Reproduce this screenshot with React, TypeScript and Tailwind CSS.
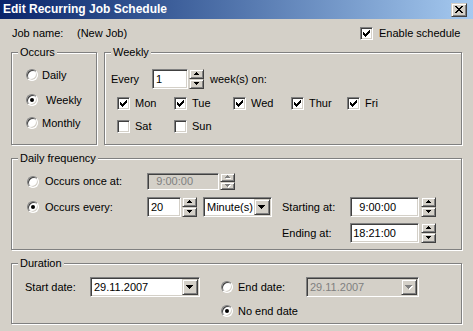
import type { ReactNode } from "react";

const sunken =
  "border border-t-[#808080] border-l-[#808080] border-b-white border-r-white shadow-[inset_1px_1px_0_#404040,inset_-1px_-1px_0_#d4d0c8]";
const raised =
  "border border-t-[#d4d0c8] border-l-[#d4d0c8] border-b-[#404040] border-r-[#404040] shadow-[inset_1px_1px_0_#ffffff,inset_-1px_-1px_0_#808080] bg-[#d4d0c8]";

function Arrow({ dir, disabled, big }: { dir: "up" | "down"; disabled?: boolean; big?: boolean }) {
  const w = big ? 7 : 5;
  const h = big ? 4 : 3;
  const pts = dir === "up" ? `0,${h} ${w / 2},0 ${w},${h}` : `0,0 ${w},0 ${w / 2},${h}`;
  const fill = disabled ? "#808080" : "#000000";
  return (
    <svg width={w + 1} height={h + 1} viewBox={`0 0 ${w + 1} ${h + 1}`} shapeRendering="crispEdges">
      {disabled && <polygon points={pts} fill="#ffffff" transform="translate(1 1)" />}
      <polygon points={pts} fill={fill} />
    </svg>
  );
}

function Spin({ disabled, short }: { disabled?: boolean; short?: boolean }) {
  return (
    <div className={`flex w-[15px] shrink-0 flex-col ${short ? "h-[17px]" : "h-[20px]"}`}>
      <div className={`${raised} flex flex-1 items-center justify-center`}>
        <Arrow dir="up" disabled={disabled} />
      </div>
      <div className={`${raised} flex flex-1 items-center justify-center`}>
        <Arrow dir="down" disabled={disabled} />
      </div>
    </div>
  );
}

function Check({ checked }: { checked?: boolean }) {
  const cols = [2, 3, 4, 3, 2, 1, 0];
  return (
    <span className={`${sunken} flex h-[13px] w-[13px] shrink-0 items-center justify-center bg-white`}>
      {checked && (
        <svg width="7" height="7" viewBox="0 0 7 7" shapeRendering="crispEdges">
          {cols.map((y, x) => (
            <rect key={x} x={x} y={y} width="1" height="3" fill="#000" />
          ))}
        </svg>
      )}
    </span>
  );
}

function Radio({ checked }: { checked?: boolean }) {
  return (
    <span className="flex h-[12px] w-[12px] shrink-0 items-center justify-center rounded-full border border-t-[#808080] border-l-[#808080] border-b-white border-r-white bg-white shadow-[inset_1px_1px_0_#404040,inset_-1px_-1px_0_#d4d0c8]">
      {checked && <span className="h-[4px] w-[4px] rounded-full bg-black" />}
    </span>
  );
}

function Combo({ text, w, disabled }: { text: string; w: string; disabled?: boolean }) {
  return (
    <div
      className={`${sunken} flex h-[20px] shrink-0 items-stretch p-[1px] ${w} ${
        disabled ? "bg-[#d4d0c8] text-[#808080]" : "bg-white"
      }`}
    >
      <span className="flex min-w-0 flex-1 items-center overflow-hidden whitespace-nowrap pl-[2px]">{text}</span>
      <span className={`${raised} flex w-[16px] shrink-0 items-center justify-center`}>
        <Arrow dir="down" big disabled={disabled} />
      </span>
    </div>
  );
}

function Group({ title, className, children }: { title: string; className: string; children: ReactNode }) {
  return (
    <div className={`border border-[#808080] shadow-[inset_1px_1px_0_#ffffff,1px_1px_0_#ffffff] ${className}`}>
      <div className="-mt-[7px] ml-[6px] h-[13px] w-fit bg-[#d4d0c8] px-[2px] leading-[13px]">{title}</div>
      {children}
    </div>
  );
}

function CloseGlyph() {
  const rows = [
    [0, 1, 6, 7],
    [1, 2, 5, 6],
    [2, 3, 4, 5],
    [3, 4],
    [2, 3, 4, 5],
    [1, 2, 5, 6],
    [0, 1, 6, 7],
  ];
  return (
    <svg width="8" height="7" viewBox="0 0 8 7" shapeRendering="crispEdges">
      {rows.map((xs, y) => xs.map((x) => <rect key={`${x}-${y}`} x={x} y={y} width="1" height="1" fill="#000" />))}
    </svg>
  );
}

const days = [
  { label: "Mon", on: true, w: "w-[57px]" },
  { label: "Tue", on: true, w: "w-[59px]" },
  { label: "Wed", on: true, w: "w-[58px]" },
  { label: "Thur", on: true, w: "w-[56px]" },
  { label: "Fri", on: true, w: "w-[50px]" },
];

export default function App() {
  return (
    <div className="h-[331px] w-[473px] overflow-hidden bg-[#d4d0c8] font-['Liberation_Sans',Arial,sans-serif] text-[11px] leading-[13px] text-black select-none">
      <div className="flex h-[19px] items-center justify-between bg-gradient-to-r from-[#0a246a] to-[#a6caf0] pl-[3px] pr-[6px]">
        <span className="text-[12px] font-bold text-white">Edit Recurring Job Schedule</span>
        <span className={`${raised} flex h-[14px] w-[16px] items-center justify-center`}>
          <CloseGlyph />
        </span>
      </div>

      <div className="px-[11px]">
        <div className="mt-[7px] flex h-[14px] items-center">
          <span className="w-[66px] pl-[1px]">Job name:</span>
          <span>(New Job)</span>
          <div className="ml-auto flex w-[102px] items-center gap-[6px]">
            <Check checked />
            <span>Enable schedule</span>
          </div>
        </div>

        <div className="mt-[12px] flex gap-[7px]">
          <Group title="Occurs" className="h-[93px] w-[86px]">
            <div className="mt-[9px] flex h-[14px] items-center gap-[4px] pl-[14px]">
              <Radio />
              <span>Daily</span>
            </div>
            <div className="mt-[11px] flex h-[14px] items-center gap-[4px] pl-[14px]">
              <Radio checked />
              <span className="ml-[4px]">Weekly</span>
            </div>
            <div className="mt-[9px] flex h-[14px] items-center gap-[4px] pl-[14px]">
              <Radio />
              <span>Monthly</span>
            </div>
          </Group>

          <Group title="Weekly" className="h-[93px] flex-1">
            <div className="mt-[10px] flex h-[20px] items-center pl-[6px]">
              <span className="w-[41px]">Every</span>
              <div className={`${sunken} flex h-[20px] w-[36px] items-center bg-white pl-[3px]`}>1</div>
              <div className="ml-[1px]">
                <Spin />
              </div>
              <span className="ml-[6px]">week(s) on:</span>
            </div>
            <div className="mt-[8px] flex h-[13px] items-center pl-[12px]">
              {days.map((d) => (
                <div key={d.label} className={`flex items-center gap-[5px] ${d.w}`}>
                  <Check checked={d.on} />
                  <span>{d.label}</span>
                </div>
              ))}
            </div>
            <div className="mt-[10px] flex h-[13px] items-center pl-[12px]">
              <div className="flex w-[57px] items-center gap-[5px]">
                <Check />
                <span>Sat</span>
              </div>
              <div className="flex items-center gap-[5px]">
                <Check />
                <span>Sun</span>
              </div>
            </div>
          </Group>
        </div>

        <Group title="Daily frequency" className="mt-[13px] h-[92px]">
          <div className="mt-[8px] flex h-[17px] items-center pl-[15px]">
            <div className="flex w-[120px] items-center gap-[6px]">
              <Radio />
              <span>Occurs once at:</span>
            </div>
            <div className={`${sunken} flex h-[17px] w-[72px] items-center justify-end bg-[#d4d0c8] pr-[25px] text-[#808080]`}>
              9:00:00
            </div>
            <div className="ml-[1px]">
              <Spin disabled short />
            </div>
          </div>

          <div className="mt-[7px] flex h-[20px] items-center pl-[15px]">
            <div className="flex w-[120px] items-center gap-[6px]">
              <Radio checked />
              <span>Occurs every:</span>
            </div>
            <div className={`${sunken} flex h-[20px] w-[34px] items-center bg-white pl-[3px]`}>20</div>
            <div className="ml-[1px]">
              <Spin />
            </div>
            <div className="ml-[6px]">
              <Combo text="Minute(s)" w="w-[69px]" />
            </div>
            <span className="ml-[10px] w-[68px]">Starting at:</span>
            <div className={`${sunken} flex h-[20px] w-[69px] items-center justify-end bg-white pr-[22px]`}>9:00:00</div>
            <div className="ml-[2px]">
              <Spin />
            </div>
          </div>

          <div className="mt-[6px] flex h-[20px] items-center pl-[270px]">
            <span className="w-[68px]">Ending at:</span>
            <div className={`${sunken} flex h-[20px] w-[69px] items-center justify-end bg-white pr-[22px]`}>18:21:00</div>
            <div className="ml-[2px]">
              <Spin />
            </div>
          </div>
        </Group>

        <Group title="Duration" className="mt-[13px] h-[61px]">
          <div className="mt-[7px] flex items-start pl-[13px]">
            <div className="flex h-[20px] items-center">
              <span className="w-[65px]">Start date:</span>
              <Combo text="29.11.2007" w="w-[110px]" />
            </div>
            <div className="ml-[21px] flex flex-col">
              <div className="flex h-[20px] items-center">
                <div className="flex w-[85px] items-center gap-[5px]">
                  <Radio />
                  <span>End date:</span>
                </div>
                <Combo text="29.11.2007" w="w-[113px]" disabled />
              </div>
              <div className="mt-[7px] flex h-[14px] items-center gap-[5px]">
                <Radio checked />
                <span>No end date</span>
              </div>
            </div>
          </div>
        </Group>
      </div>
    </div>
  );
}
